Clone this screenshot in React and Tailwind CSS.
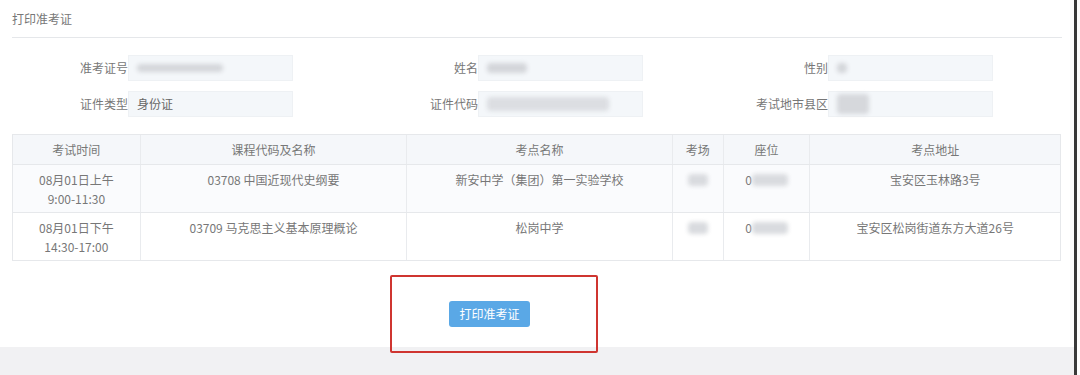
const font = { fontFamily: '"Noto Sans CJK SC", "Noto Sans", sans-serif' };

function Blur({ className }) {
  return <span className={`inline-block rounded-sm bg-[#d4d6da] blur-[2px] ${className}`} />;
}

function Field({ label, children }) {
  return (
    <div className="flex w-[350px] items-center">
      <div className="w-[116px] text-right text-[12px] text-[#777]">{label}</div>
      <div className="flex h-[26px] w-[165px] items-center border border-[#eef1f4] bg-[#f4f7fa] px-2 text-[12px] text-[#666]">
        {children}
      </div>
    </div>
  );
}

const cols = ['w-[127px]', 'w-[267px]', 'w-[266px]', 'w-[51px]', 'w-[87px]', 'w-[251px]'];
const heads = ['考试时间', '课程代码及名称', '考点名称', '考场', '座位', '考点地址'];

const rows = [
  {
    time: ['08月01日上午', '9:00-11:30'],
    course: '03708  中国近现代史纲要',
    site: '新安中学（集团）第一实验学校',
    addr: '宝安区玉林路3号',
    bg: 'bg-[#fafbfd]',
  },
  {
    time: ['08月01日下午', '14:30-17:00'],
    course: '03709  马克思主义基本原理概论',
    site: '松岗中学',
    addr: '宝安区松岗街道东方大道26号',
    bg: 'bg-white',
  },
];

export default function App() {
  return (
    <div className="relative h-[375px] w-[1080px] overflow-hidden bg-white" style={font}>
      <div className="flex h-full w-[1077px] flex-col border-r-[3px] border-[#3a3a3a]">
        <div className="h-[347px] bg-white px-3">
          <div className="border-b border-[#e5e7ea] pt-[11px] pb-[10px] text-[12px] leading-[16px] text-[#777]">
            打印准考证
          </div>

          <div className="mt-[17px] flex flex-col gap-[10px]">
            <div className="flex">
              <Field label="准考证号">
                <Blur className="h-[8px] w-[86px]" />
              </Field>
              <Field label="姓名">
                <Blur className="h-[10px] w-[40px] bg-[#c8cacf]" />
              </Field>
              <Field label="性别">
                <Blur className="h-[10px] w-[10px] bg-[#c8cacf]" />
              </Field>
            </div>
            <div className="flex">
              <Field label="证件类型">身份证</Field>
              <Field label="证件代码">
                <Blur className="h-[14px] w-[122px] bg-[#dcdee2]" />
              </Field>
              <Field label="考试地市县区">
                <Blur className="h-[20px] w-[32px] bg-[#d6d8dc]" />
              </Field>
            </div>
          </div>

          <div className="mt-[17px] w-[1049px] border border-[#e6e8eb] text-center text-[12px] text-[#777]">
            <div className="flex h-[29px] items-center bg-[#f5f7fa]">
              {heads.map((h, i) => (
                <div key={h} className={`${cols[i]} flex h-full items-center justify-center ${i > 0 ? 'border-l border-[#e9ebee]' : ''}`}>
                  {h}
                </div>
              ))}
            </div>
            {rows.map((r) => (
              <div key={r.course} className={`flex border-t border-[#e6e8eb] leading-[19px] ${r.bg}`}>
                <div className={`${cols[0]} pt-[5px] pb-[4px]`}>
                  <div>{r.time[0]}</div>
                  <div>{r.time[1]}</div>
                </div>
                <div className={`${cols[1]} border-l border-[#e9ebee] pt-[5px]`}>{r.course}</div>
                <div className={`${cols[2]} border-l border-[#e9ebee] pt-[5px]`}>{r.site}</div>
                <div className={`${cols[3]} border-l border-[#e9ebee] pt-[5px]`}>
                  <Blur className="mt-[4px] h-[12px] w-[20px] bg-[#d9dbdf]" />
                </div>
                <div className={`${cols[4]} flex items-start justify-center border-l border-[#e9ebee] pt-[5px]`}>
                  <span>0</span>
                  <Blur className="mt-[4px] h-[12px] w-[36px] bg-[#d9dbdf]" />
                </div>
                <div className={`${cols[5]} border-l border-[#e9ebee] pt-[5px]`}>{r.addr}</div>
              </div>
            ))}
          </div>

          <div className="mt-[39px] pl-[437px]">
            <button className="h-[26px] w-[81px] rounded-[3px] bg-[#5aa8e6] text-[12px] text-white">
              打印准考证
            </button>
          </div>
        </div>
        <div className="flex-1 bg-[#f1f1f3]" />
      </div>

      <div className="absolute left-[390px] top-[275px] h-[78px] w-[208px] rounded-[2px] border-2 border-[#cf3530]" />
    </div>
  );
}
